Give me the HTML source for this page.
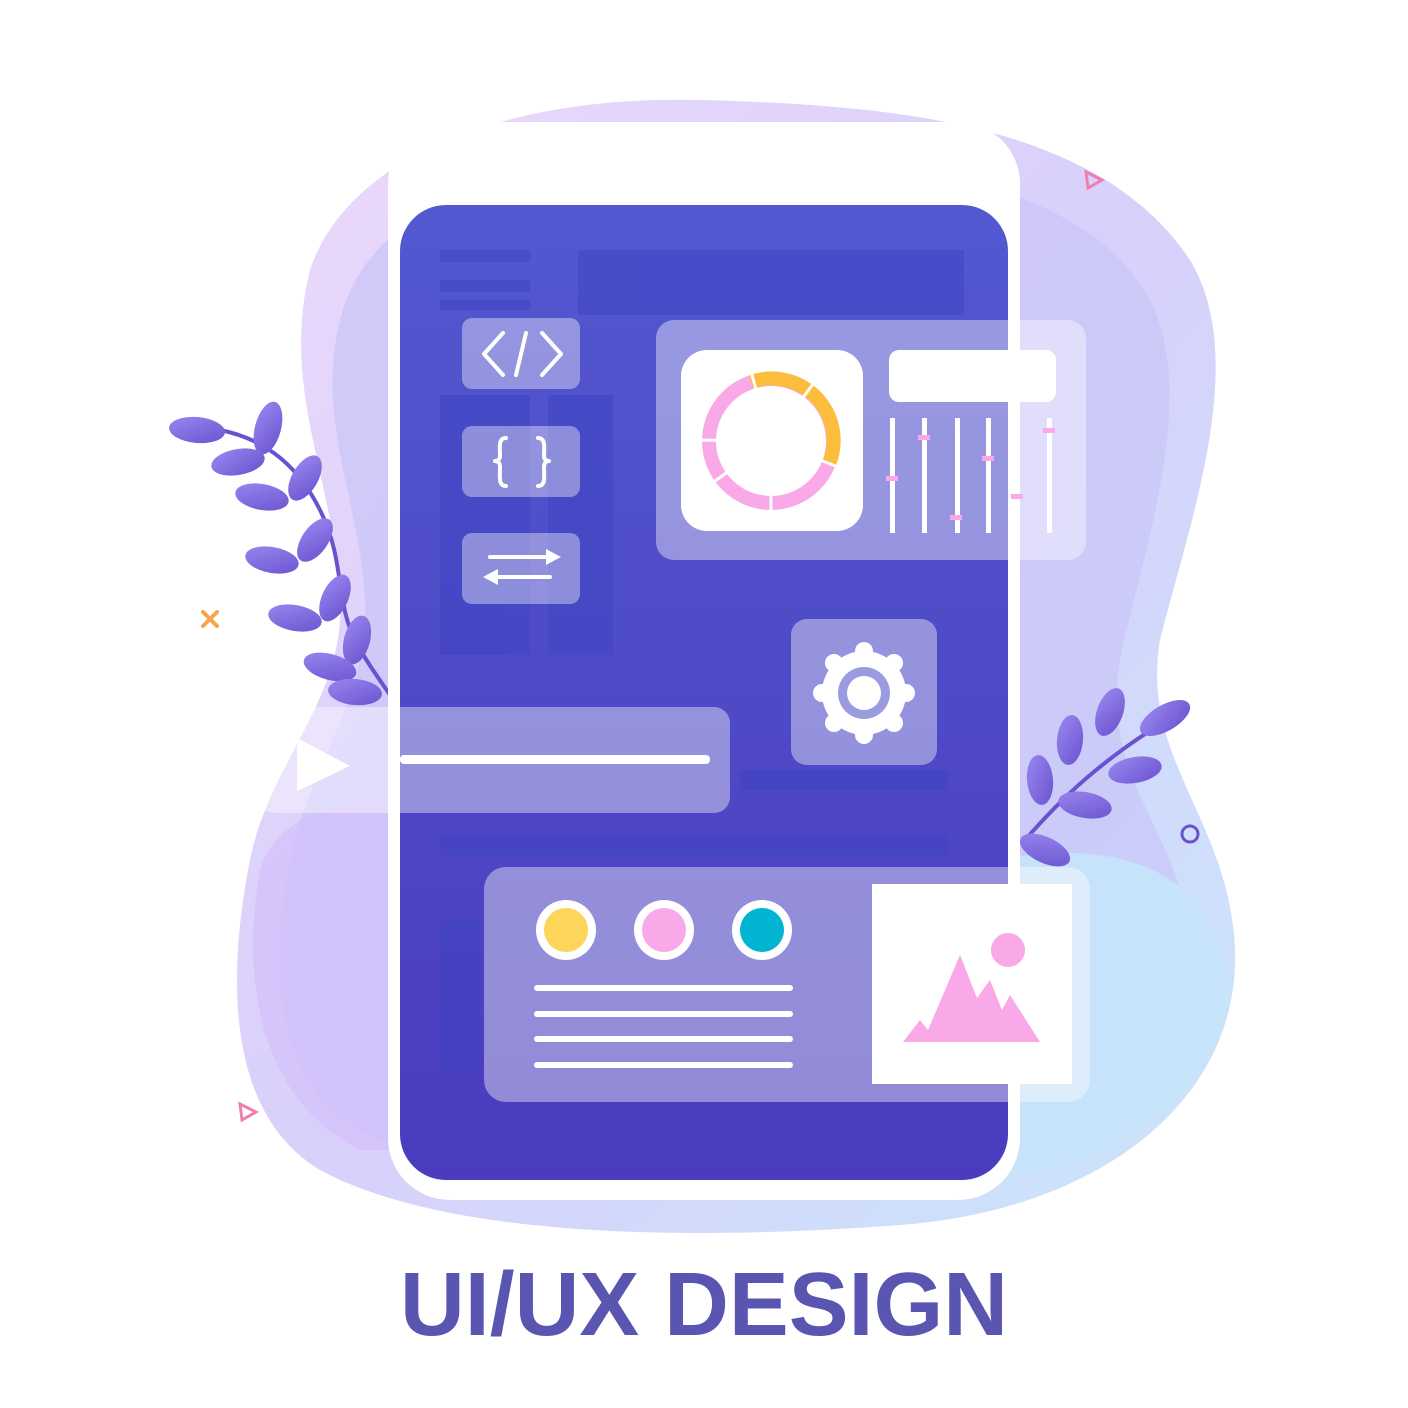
<!DOCTYPE html>
<html><head><meta charset="utf-8"><style>
html,body{margin:0;padding:0;background:#fff}
svg{display:block}
</style></head><body>
<svg width="1408" height="1408" viewBox="0 0 1408 1408" xmlns="http://www.w3.org/2000/svg">
<defs>
<linearGradient id="bg1" x1="0" y1="0" x2="1" y2="1">
<stop offset="0" stop-color="#ecd9fb"/><stop offset="0.5" stop-color="#d8d0fb"/><stop offset="1" stop-color="#c9e6fb"/>
</linearGradient>
<linearGradient id="scr" x1="0" y1="0" x2="0" y2="1">
<stop offset="0" stop-color="#5358d0"/><stop offset="1" stop-color="#4a3cbd"/>
</linearGradient>
<linearGradient id="leaf" x1="0" y1="0" x2="1" y2="1">
<stop offset="0" stop-color="#9a88f0"/><stop offset="1" stop-color="#6a52cf"/>
</linearGradient>
</defs>
<path d="M310 270 C350 150 520 95 700 100 C900 105 1100 125 1190 260 C1250 360 1190 520 1160 640 C1140 760 1230 820 1235 950 C1240 1100 1100 1210 900 1225 C700 1240 450 1240 320 1170 C220 1110 230 960 250 860 C270 760 345 700 340 600 C335 480 280 390 310 270 Z" fill="url(#bg1)"/>
<path d="M340 320 C370 200 520 155 700 155 C880 155 1080 175 1150 300 C1200 400 1140 560 1120 660 C1100 780 1180 830 1190 940 C1200 1080 1080 1180 900 1190 C700 1200 480 1200 360 1130 C270 1080 270 960 290 860 C310 760 370 700 365 600 C360 500 315 420 340 320 Z" fill="#c8c4f8" opacity="0.7"/>
<path d="M1000 860 C1100 840 1200 860 1225 960 C1245 1060 1150 1160 1000 1180 Z" fill="#c6e4fb" opacity="0.9"/>
<path d="M260 870 C240 980 260 1100 360 1150 L400 1150 L400 800 C330 800 275 820 260 870 Z" fill="#d4c2fb" opacity="0.8"/>
<path d="M1086 172 L1102 180 L1088 188 Z" fill="none" stroke="#f07fb0" stroke-width="3"/>
<path d="M240 1104 L256 1112 L242 1120 Z" fill="none" stroke="#f07fb0" stroke-width="3"/>
<path d="M203 612 L217 626 M217 612 L203 626" stroke="#f7a54c" stroke-width="4" stroke-linecap="round"/>
<circle cx="1190" cy="834" r="8" fill="none" stroke="#6a52cf" stroke-width="3"/>
<g fill="url(#leaf)">
<path d="M220 430 C270 440 300 470 320 510 C345 560 335 600 355 640 C365 660 380 680 390 695" fill="none" stroke="#6a52cf" stroke-width="4"/>
<ellipse cx="197" cy="430" rx="28" ry="13" transform="rotate(5 197 430)"/>
<ellipse cx="268" cy="428" rx="13" ry="27" transform="rotate(15 268 428)"/>
<ellipse cx="238" cy="462" rx="27" ry="13" transform="rotate(-10 238 462)"/>
<ellipse cx="305" cy="478" rx="13" ry="25" transform="rotate(30 305 478)"/>
<ellipse cx="262" cy="497" rx="27" ry="13" transform="rotate(10 262 497)"/>
<ellipse cx="315" cy="540" rx="13" ry="25" transform="rotate(35 315 540)"/>
<ellipse cx="272" cy="560" rx="27" ry="13" transform="rotate(10 272 560)"/>
<ellipse cx="335" cy="598" rx="13" ry="25" transform="rotate(25 335 598)"/>
<ellipse cx="295" cy="618" rx="27" ry="13" transform="rotate(10 295 618)"/>
<ellipse cx="357" cy="640" rx="13" ry="25" transform="rotate(15 357 640)"/>
<ellipse cx="330" cy="667" rx="27" ry="13" transform="rotate(15 330 667)"/>
<ellipse cx="355" cy="692" rx="27" ry="13" transform="rotate(5 355 692)"/>
</g>
<g fill="url(#leaf)">
<path d="M1025 840 C1060 800 1100 760 1175 715" fill="none" stroke="#6a52cf" stroke-width="4"/>
<ellipse cx="1165" cy="718" rx="28" ry="13" transform="rotate(-30 1165 718)"/>
<ellipse cx="1110" cy="712" rx="13" ry="25" transform="rotate(20 1110 712)"/>
<ellipse cx="1135" cy="770" rx="27" ry="13" transform="rotate(-10 1135 770)"/>
<ellipse cx="1070" cy="740" rx="13" ry="25" transform="rotate(5 1070 740)"/>
<ellipse cx="1085" cy="805" rx="27" ry="13" transform="rotate(10 1085 805)"/>
<ellipse cx="1040" cy="780" rx="13" ry="25" transform="rotate(-5 1040 780)"/>
<ellipse cx="1045" cy="850" rx="27" ry="13" transform="rotate(25 1045 850)"/>
</g>
<rect x="388" y="122" width="632" height="1078" rx="62" fill="#fff"/>
<rect x="400" y="205" width="608" height="975" rx="46" fill="url(#scr)"/>
<g fill="#3f44c2" opacity="0.55">
<rect x="578" y="250" width="386" height="65"/>
<rect x="440" y="250" width="90" height="12"/>
<rect x="440" y="280" width="90" height="12"/>
<rect x="440" y="300" width="90" height="10"/>
<rect x="440" y="395" width="90" height="260"/>
<rect x="548" y="395" width="65" height="260"/>
<rect x="440" y="835" width="508" height="20"/>
<rect x="740" y="770" width="208" height="20"/>
<rect x="440" y="920" width="40" height="150"/>
</g>
<g fill="#fff" fill-opacity="0.38">
<rect x="462" y="318" width="118" height="71" rx="10"/>
<rect x="462" y="426" width="118" height="71" rx="10"/>
<rect x="462" y="533" width="118" height="71" rx="10"/>
</g>
<g stroke="#fff" stroke-width="4" fill="none" stroke-linecap="round" stroke-linejoin="round">
<path d="M503 333 L484 354 L503 375"/><path d="M526 333 L516 375"/><path d="M542 333 L561 354 L542 375"/>
<path d="M506 438 C498 438 500 448 500 456 C500 460 497 461 495 461 C497 461 500 462 500 467 C500 476 498 486 506 486"/>
<path d="M538 438 C546 438 544 448 544 456 C544 460 547 461 549 461 C547 461 544 462 544 467 C544 476 546 486 538 486"/>
<path d="M490 557 L550 557"/><path d="M494 577 L550 577"/>
</g>
<path d="M546 549 L561 557 L546 565 Z M498 569 L483 577 L498 585 Z" fill="#fff"/>
<rect x="656" y="320" width="430" height="240" rx="18" fill="#fff" fill-opacity="0.4"/>
<rect x="681" y="350" width="182" height="181" rx="26" fill="#fff"/>
<circle cx="771" cy="441" r="62" fill="none" stroke="#f9a8e8" stroke-width="14"/>
<path d="M751 382 A62 62 0 0 1 829 464" fill="none" stroke="#fcbd3c" stroke-width="14"/>
<g stroke="#fff" stroke-width="3">
<line x1="771" y1="441" x2="749" y2="365"/><line x1="771" y1="441" x2="816" y2="380"/><line x1="771" y1="441" x2="846" y2="470"/>
<line x1="771" y1="441" x2="771" y2="515"/><line x1="771" y1="441" x2="708" y2="486"/><line x1="771" y1="441" x2="696" y2="440"/>
</g>
<circle cx="771" cy="441" r="52" fill="#fff"/>
<rect x="889" y="350" width="167" height="52" rx="10" fill="#fff"/>
<g fill="#fff"><rect x="890" y="418" width="5" height="115"/><rect x="922" y="418" width="5" height="115"/><rect x="955" y="418" width="5" height="115"/><rect x="986" y="418" width="5" height="115"/><rect x="1047" y="418" width="5" height="115"/></g>
<g fill="#f9a8e8"><rect x="886" y="476" width="12" height="5"/><rect x="918" y="435" width="12" height="5"/><rect x="950" y="515" width="12" height="5"/><rect x="982" y="456" width="12" height="5"/><rect x="1011" y="494" width="12" height="5"/><rect x="1043" y="428" width="12" height="5"/></g>
<rect x="791" y="619" width="146" height="146" rx="16" fill="#fff" fill-opacity="0.4"/>
<g fill="#fff">
<circle cx="864" cy="693" r="42"/>
<g><circle cx="864" cy="651" r="9"/><circle cx="864" cy="735" r="9"/><circle cx="822" cy="693" r="9"/><circle cx="906" cy="693" r="9"/><circle cx="834" cy="663" r="9"/><circle cx="894" cy="663" r="9"/><circle cx="834" cy="723" r="9"/><circle cx="894" cy="723" r="9"/></g>
</g>
<circle cx="864" cy="693" r="26" fill="#9b9be0"/>
<circle cx="864" cy="693" r="17" fill="#fff"/>
<rect x="258" y="707" width="472" height="106" rx="16" fill="#fff" fill-opacity="0.4"/>
<rect x="388" y="707" width="12" height="106" fill="#fff"/>
<path d="M297 738 L350 766 L297 791 Z" fill="#fff"/>
<rect x="400" y="755" width="310" height="9" rx="4" fill="#fff"/>
<rect x="484" y="867" width="606" height="235" rx="22" fill="#fff" fill-opacity="0.4"/>
<rect x="1008" y="867" width="12" height="235" fill="#fff" fill-opacity="0.5"/>
<circle cx="566" cy="930" r="30" fill="#fff"/><circle cx="566" cy="930" r="22" fill="#fcd55a"/>
<circle cx="664" cy="930" r="30" fill="#fff"/><circle cx="664" cy="930" r="22" fill="#f9a8e8"/>
<circle cx="762" cy="930" r="30" fill="#fff"/><circle cx="762" cy="930" r="22" fill="#00b4d2"/>
<g fill="#fff"><rect x="534" y="985" width="259" height="6" rx="3"/><rect x="534" y="1011" width="259" height="6" rx="3"/><rect x="534" y="1036" width="259" height="6" rx="3"/><rect x="534" y="1062" width="259" height="6" rx="3"/></g>
<rect x="872" y="884" width="200" height="200" fill="#fff"/>
<circle cx="1008" cy="950" r="17" fill="#f9a8e8"/>
<path d="M903 1042 L920 1020 L928 1030 L960 955 L977 998 L990 980 L1002 1010 L1010 995 L1040 1042 Z" fill="#f9a8e8"/>
<text x="704" y="1335" text-anchor="middle" font-family="Liberation Sans, sans-serif" font-weight="bold" font-size="90" fill="#5a55b0" textLength="608" lengthAdjust="spacingAndGlyphs">UI/UX DESIGN</text>
</svg>
</body></html>
